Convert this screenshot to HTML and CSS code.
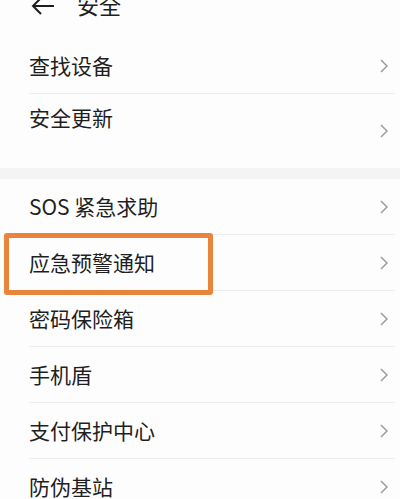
FILE: index.html
```html
<!DOCTYPE html>
<html lang="zh-CN">
<head>
    <meta charset="UTF-8">
    <title>安全</title>
    <link rel="stylesheet" href="styles.css">
</head>
<body>
    <div class="topbar">
        <svg class="back" width="26" height="22" viewBox="0 0 26 22">
            <path d="M3 12 H24 M11 4 L3 12 L11 20" fill="none" stroke="#1e1e1e" stroke-width="2"/>
        </svg>
        <span class="title">安全</span>
    </div>

    <div class="group">
        <div class="row"><span class="label">查找设备</span><svg class="arrow" width="8" height="14" viewBox="0 0 8 14"><path d="M1 1 L7 7 L1 13" fill="none" stroke="#9d9d9d" stroke-width="1.5"/></svg></div>
        <div class="row tall"><span class="label">安全更新</span><svg class="arrow" width="8" height="14" viewBox="0 0 8 14"><path d="M1 1 L7 7 L1 13" fill="none" stroke="#9d9d9d" stroke-width="1.5"/></svg></div>
    </div>

    <div class="band"></div>

    <div class="group">
        <div class="row"><span class="label">SOS 紧急求助</span><svg class="arrow" width="8" height="14" viewBox="0 0 8 14"><path d="M1 1 L7 7 L1 13" fill="none" stroke="#9d9d9d" stroke-width="1.5"/></svg></div>
        <div class="row highlight"><span class="label">应急预警通知</span><svg class="arrow" width="8" height="14" viewBox="0 0 8 14"><path d="M1 1 L7 7 L1 13" fill="none" stroke="#9d9d9d" stroke-width="1.5"/></svg></div>
        <div class="row"><span class="label">密码保险箱</span><svg class="arrow" width="8" height="14" viewBox="0 0 8 14"><path d="M1 1 L7 7 L1 13" fill="none" stroke="#9d9d9d" stroke-width="1.5"/></svg></div>
        <div class="row"><span class="label">手机盾</span><svg class="arrow" width="8" height="14" viewBox="0 0 8 14"><path d="M1 1 L7 7 L1 13" fill="none" stroke="#9d9d9d" stroke-width="1.5"/></svg></div>
        <div class="row"><span class="label">支付保护中心</span><svg class="arrow" width="8" height="14" viewBox="0 0 8 14"><path d="M1 1 L7 7 L1 13" fill="none" stroke="#9d9d9d" stroke-width="1.5"/></svg></div>
        <div class="row"><span class="label">防伪基站</span><svg class="arrow" width="8" height="14" viewBox="0 0 8 14"><path d="M1 1 L7 7 L1 13" fill="none" stroke="#9d9d9d" stroke-width="1.5"/></svg></div>
    </div>
</body>
</html>
```

FILE: styles.css
```css
body {
    margin: 0;
    background-color: #fdfdfd;
    font-family: "Noto Sans CJK SC", "Noto Sans", sans-serif;
    color: #1f1f1f;
    overflow: hidden;
}
.topbar {
    display: flex;
    align-items: flex-start;
    height: 45px;
    margin-top: -7px;
    padding-left: 30px;
}
.topbar .back {
    margin-top: 1px;
}
.topbar .title {
    margin-left: 21px;
    font-size: 22px;
    line-height: 22px;
    color: #1e1e1e;
}
.group .row {
    display: flex;
    justify-content: space-between;
    align-items: center;
    height: 55px;
    margin: 0 5px 0 29px;
    padding-right: 7px;
    border-bottom: 1px solid #ececec;
}
.group .row:last-child {
    border-bottom: none;
}
.group .label {
    font-size: 21px;
    line-height: 24px;
    padding-bottom: 2px;
}
.group .tall {
    height: 74px;
    align-items: flex-start;
}
.group .tall .label {
    padding-top: 11px;
}
.group .tall .arrow {
    align-self: center;
}
.band {
    height: 11px;
    background-color: #f4f4f4;
}
.highlight {
    position: relative;
}
.highlight::after {
    content: "";
    position: absolute;
    top: -2px;
    left: -25px;
    width: 199px;
    height: 52px;
    border: 5px solid #e8853b;
    border-radius: 3px;
}
```
